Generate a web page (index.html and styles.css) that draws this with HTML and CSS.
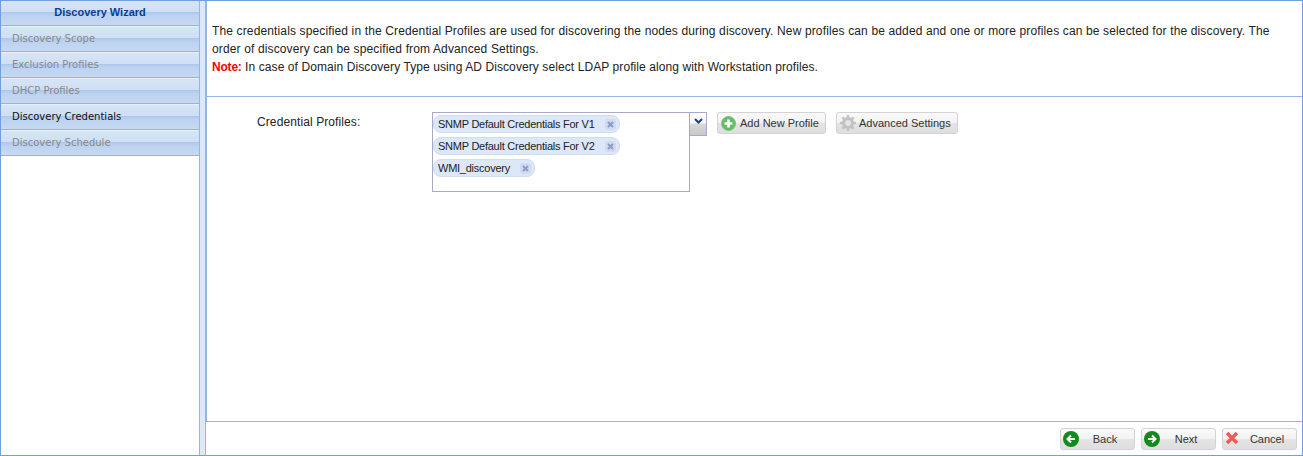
FILE: index.html
```html
<!DOCTYPE html>
<html lang="en">
<head>
<meta charset="utf-8">
<title>Discovery Wizard</title>
<link rel="stylesheet" href="styles.css">
</head>
<body>
<div class="app">
  <aside class="side">
    <div class="step title">Discovery Wizard</div>
    <div class="step">Discovery Scope</div>
    <div class="step">Exclusion Profiles</div>
    <div class="step">DHCP Profiles</div>
    <div class="step current">Discovery Credentials</div>
    <div class="step">Discovery Schedule</div>
  </aside>
  <div class="splitter"></div>
  <main class="main">
    <div class="content">
      <section class="intro">
        <p class="lead">The credentials specified in the Credential Profiles are used for discovering the nodes during discovery. New profiles can be added and one or more profiles can be selected for the discovery. The order of discovery can be specified from Advanced Settings.</p>
        <p class="remark"><strong class="note">Note:</strong> In case of Domain Discovery Type using AD Discovery select LDAP profile along with Workstation profiles.</p>
      </section>
      <section class="form">
        <label class="label">Credential Profiles:</label>
        <div class="select">
          <div class="tags">
            <span class="tag">SNMP Default Credentials For V1<i class="x"><svg width="9" height="9" viewBox="0 0 9 9"><path d="M2 2l5 5M7 2l-5 5" stroke="#8d9cc0" stroke-width="2"/></svg></i></span>
            <span class="tag">SNMP Default Credentials For V2<i class="x"><svg width="9" height="9" viewBox="0 0 9 9"><path d="M2 2l5 5M7 2l-5 5" stroke="#8d9cc0" stroke-width="2"/></svg></i></span>
            <span class="tag">WMI_discovery<i class="x"><svg width="9" height="9" viewBox="0 0 9 9"><path d="M2 2l5 5M7 2l-5 5" stroke="#8d9cc0" stroke-width="2"/></svg></i></span>
          </div>
          <div class="arrow"><svg width="9" height="6" viewBox="0 0 9 6"><path d="M1 1l3.5 3.5L8 1" fill="none" stroke="#1f3f7f" stroke-width="2"/></svg></div>
        </div>
        <button class="btn add"><svg width="15" height="15" viewBox="0 0 15 15"><circle cx="7.5" cy="7.5" r="7" fill="#66bb66" stroke="#7cc27c"/><path d="M7.5 3.5v8M3.5 7.5h8" stroke="#fff" stroke-width="2.6"/></svg>Add New Profile</button>
        <button class="btn adv"><svg width="18" height="18" viewBox="0 0 18 18"><circle cx="9" cy="9" r="4.5" fill="#e4e4e4" stroke="#c2c2c2" stroke-width="3"/><path d="M9 1v3M9 14v3M1 9h3M14 9h3M3.4 3.4l2 2M12.6 12.6l2 2M3.4 14.6l2-2M12.6 5.4l2-2" stroke="#c2c2c2" stroke-width="2.4"/></svg>Advanced Settings</button>
      </section>
    </div>
    <footer class="foot">
      <button class="btn nav"><svg class="ico" width="16" height="16" viewBox="0 0 16 16"><circle cx="8" cy="8" r="8" fill="#138a1c"/><path d="M12 8H5M8 4.5L4.5 8 8 11.5" fill="none" stroke="#fff" stroke-width="2"/></svg><span>Back</span></button>
      <button class="btn nav"><svg class="ico" width="16" height="16" viewBox="0 0 16 16"><circle cx="8" cy="8" r="8" fill="#138a1c"/><path d="M4 8h7M8 4.5L11.5 8 8 11.5" fill="none" stroke="#fff" stroke-width="2"/></svg><span>Next</span></button>
      <button class="btn nav"><svg class="ico" width="14" height="14" viewBox="0 0 14 14"><path d="M2 2l10 10M12 2L2 12" stroke="#ee5a5a" stroke-width="3.4"/></svg><span>Cancel</span></button>
    </footer>
  </main>
</div>
</body>
</html>
```
FILE: styles.css
```css
* { box-sizing: border-box; }
html, body { height: 100%; }
body { margin: 0; background: #fff; font-family: "Liberation Sans", Arial, sans-serif; font-size: 12px; color: #222; }
.app { display: flex; width: 1303px; height: 456px; border: 1px solid #6f9fdc; overflow: hidden; }
.side { width: 198px; flex: none; }
.step { height: 26px; padding: 0 0 1px 11px; display: flex; align-items: center; font-family: "DejaVu Sans", sans-serif; font-size: 10px; color: #888; border-bottom: 1px solid #8fb4e6; border-top: 1px solid #e8f0fb; background: linear-gradient(#d6e4f6 0, #cfdff4 44%, #aac6ec 46%, #bcd2f0 60%, #c6d9f2 100%); }
.step.current { color: #111; }
.title { height: 25px; border-top: 0; justify-content: center; padding: 0 0 3px; font-family: "Liberation Sans", sans-serif; font-size: 11px; font-weight: bold; color: #0a3d8f; }
.splitter { width: 7px; flex: none; background: #dfe8f9; border-left: 1px solid #94b6e6; border-right: 1px solid #94b6e6; }
.main { flex: 1; display: flex; flex-direction: column; min-width: 0; }
.content { height: 421px; flex: none; border-left: 1px solid #94b6e6; border-bottom: 1px solid #94b6e6; }
.intro { height: 96px; padding: 21px 30px 0 5px; border-bottom: 1px solid #94b6e6; line-height: 18px; }
.intro p { margin: 0; }
.lead { letter-spacing: 0.135px; }
.remark { letter-spacing: 0.09px; }
.note { color: #f00; letter-spacing: -0.2px; }
.form { display: flex; align-items: flex-start; padding: 15px 0 0 50px; }
.label { width: 175px; flex: none; padding-top: 3px; color: #222; font-size: 12px; letter-spacing: 0.1px; }
.select { display: flex; align-items: flex-start; }
.tags { width: 258px; height: 80px; border: 1px solid #a9a9c9; display: flex; flex-direction: column; align-items: flex-start; gap: 4px; padding: 2px 0 0 0; }
.tag { display: inline-flex; align-items: center; height: 18px; padding: 0 3px 0 4px; border-radius: 8px; background: #dce7f8; border: 1px solid #cfdcf2; font-size: 11px; letter-spacing: -0.25px; color: #222; }
.x { display: inline-flex; margin-left: 10px; width: 11px; height: 11px; align-items: center; justify-content: center; background: #d0dbf3; border-radius: 3px; }
.arrow { width: 17px; height: 24px; display: flex; justify-content: center; padding-top: 5px; border: 1px solid #a9a9c9; border-left: 0; background: linear-gradient(#fff 0, #f6f6f6 45%, #d8d8d8 50%, #c8c8c8 100%); }
.btn { display: inline-flex; align-items: center; height: 22px; padding: 0; border: 1px solid #d3d3d3; border-radius: 3px; background: linear-gradient(#fafafa 0, #f2f2f2 50%, #e4e4e4 52%, #dedede 100%); font-family: "Liberation Sans", sans-serif; font-size: 11px; color: #333; }
.add { margin-left: 10px; width: 109px; padding-left: 3px; gap: 4px; }
.adv { margin-left: 10px; width: 122px; padding-left: 2px; gap: 2px; }
.foot { flex: 1; display: flex; justify-content: flex-end; align-items: flex-start; gap: 6px; padding: 6px 5px 0 0; }
.nav { width: 75px; position: relative; justify-content: center; padding-left: 15px; }
.nav .ico { position: absolute; left: 2px; top: 2px; }
```
